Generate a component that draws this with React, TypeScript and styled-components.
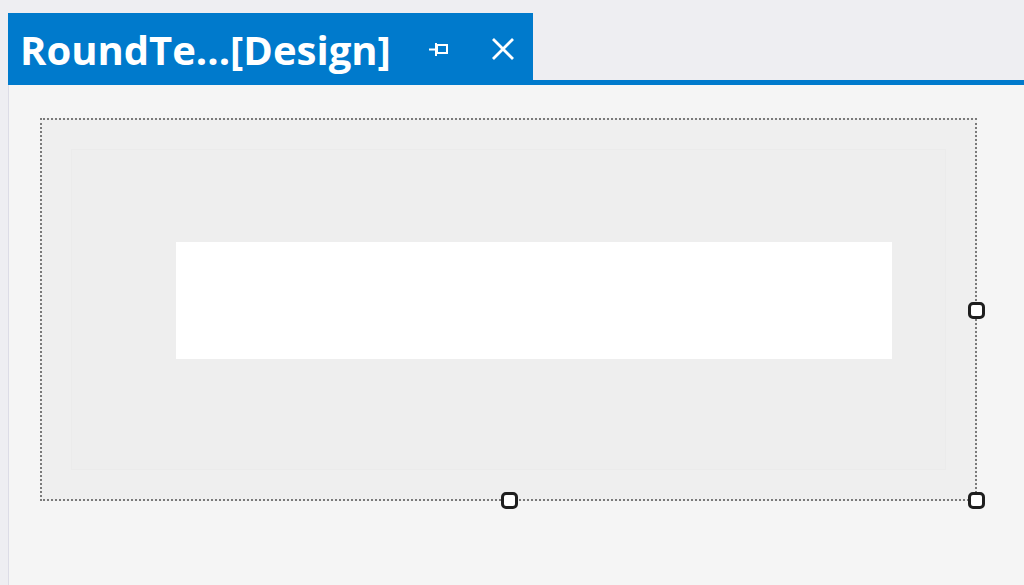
import React from "react";
import styled, { createGlobalStyle } from "styled-components";

const Global = createGlobalStyle`
  html, body {
    margin: 0;
    padding: 0;
    background: #eeeef2;
  }
  #root {
    width: 1024px;
    height: 585px;
    overflow: hidden;
  }
`;

const Wrapper = styled.div`
  display: flex;
  flex-direction: column;
  width: 1024px;
  height: 585px;
  background: #eeeef2;
`;

const TabStrip = styled.div`
  display: flex;
  align-items: flex-end;
  height: 80px;
  padding: 13px 0 0 8px;
  box-sizing: border-box;
`;

const Tab = styled.div`
  display: flex;
  align-items: center;
  width: 525px;
  height: 67px;
  padding: 5px 0 0 12px;
  box-sizing: border-box;
  background: #007acc;
  color: #ffffff;
`;

const Title = styled.span`
  font-family: "Open Sans", "Noto Sans", sans-serif;
  font-weight: 700;
  font-size: 40px;
  letter-spacing: 0;
  white-space: nowrap;
`;

const TabButton = styled.span<{ $left: number }>`
  display: flex;
  align-items: center;
  justify-content: center;
  margin-left: ${(p) => p.$left}px;
  width: 26px;
  height: 26px;
`;

const Underline = styled.div`
  height: 5px;
  background: #007acc;
  margin-left: 8px;
`;

const Body = styled.div`
  flex: 1;
  display: flex;
  padding-left: 8px;
`;

const Surface = styled.div`
  flex: 1;
  border-left: 1px solid #dcdce6;
  background: #f5f5f5;
  padding: 33px 0 0 31px;
`;

const Selection = styled.div`
  position: relative;
  width: 937px;
  height: 383px;
  border: 2px dotted #7a7a7a;
  box-sizing: border-box;
  background: #efefef;
  padding: 29px;
`;

const Inner = styled.div`
  height: 100%;
  background: #eeeeee;
  border: 1px solid #ebebeb;
  box-sizing: border-box;
  padding: 92px 0 0 104px;
`;

const TextBox = styled.div`
  width: 716px;
  height: 117px;
  background: #ffffff;
`;

const Handle = styled.span<{ $x: string; $y: string }>`
  position: absolute;
  left: ${(p) => p.$x};
  top: ${(p) => p.$y};
  width: 17px;
  height: 17px;
  margin: -8px 0 0 -8px;
  box-sizing: border-box;
  border: 3px solid #1e1e1e;
  border-radius: 5px;
  background: #ffffff;
`;

function PinIcon() {
  return (
    <svg width="22" height="18" viewBox="0 0 22 18">
      <path d="M1 9.5h7" stroke="#fff" strokeWidth="2" />
      <path d="M8 3v13" stroke="#fff" strokeWidth="2" />
      <rect x="9" y="5" width="10" height="8" fill="none" stroke="#fff" strokeWidth="2" />
    </svg>
  );
}

function CloseIcon() {
  return (
    <svg width="24" height="24" viewBox="0 0 24 24">
      <path d="M2 2L22 22M22 2L2 22" stroke="#fff" strokeWidth="2.8" />
    </svg>
  );
}

export default function App() {
  return (
    <Wrapper>
      <Global />
      <TabStrip>
        <Tab>
          <Title>RoundTe...[Design]</Title>
          <TabButton $left={35}>
            <PinIcon />
          </TabButton>
          <TabButton $left={38}>
            <CloseIcon />
          </TabButton>
        </Tab>
      </TabStrip>
      <Underline />
      <Body>
        <Surface>
          <Selection>
            <Inner>
              <TextBox />
            </Inner>
            <Handle $x="calc(100% + 1px)" $y="50%" />
            <Handle $x="50%" $y="calc(100% + 1px)" />
            <Handle $x="calc(100% + 1px)" $y="calc(100% + 1px)" />
          </Selection>
        </Surface>
      </Body>
    </Wrapper>
  );
}
